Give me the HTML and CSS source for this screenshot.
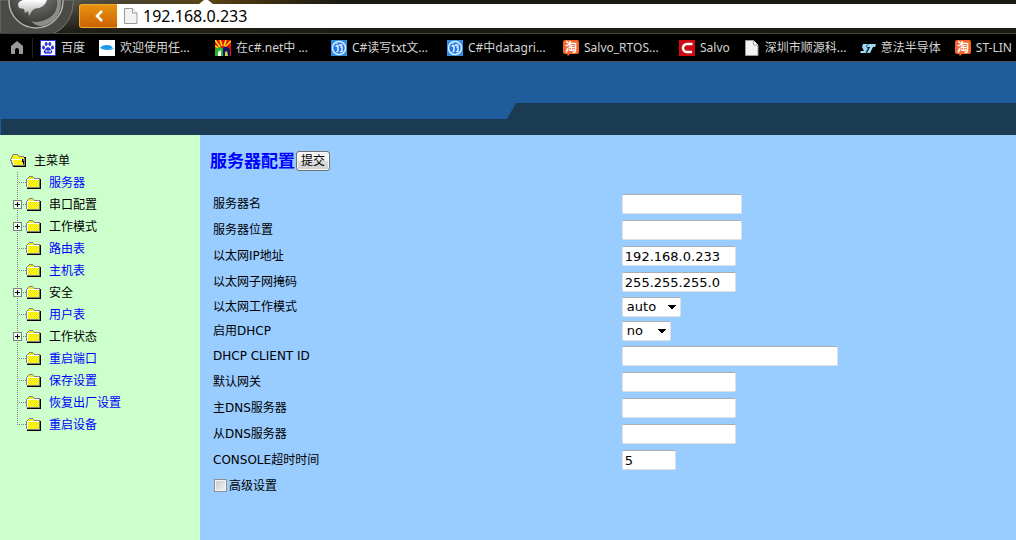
FILE: index.html
```html
<!DOCTYPE html>
<html lang="zh-CN">
<head>
<meta charset="utf-8">
<title>服务器配置</title>
<link rel="stylesheet" href="styles.css">
</head>
<body>
<svg class="defs" width="0" height="0" aria-hidden="true">
  <defs>
    <pattern id="dither" width="2" height="2" patternUnits="userSpaceOnUse">
      <rect width="2" height="2" fill="#ffff00"/>
      <rect width="1" height="1" fill="#ece420"/>
      <rect x="1" y="1" width="1" height="1" fill="#ece420"/>
    </pattern>
    <symbol id="folder" viewBox="0 0 16 14">
      <path d="M1 12h13V3h1v10H1z" fill="#000"/>
      <path d="M0 3h1V2h1V1h1V0h4v1h1v1h6v10H1v-1H0z" fill="#808080"/>
      <path d="M14 3h1v10H2v-1h12z" fill="#000"/>
      <path d="M2 3V2h1V1h4v1h1v1h5v8H2z" fill="url(#dither)"/>
      <path d="M1 11V3h12v1H2v7z" fill="#fff"/>
    </symbol>
    <symbol id="folder-open" viewBox="0 0 16 14">
      <path d="M3 12h11V3h2v10H3z" fill="#000"/>
      <path d="M1 3h1V1h1V0h5v1h1v1h5v2h1v8H2v-2H1V7H0V5h1z" fill="#808080"/>
      <path d="M2 3h1V1h5v1h1v1h5v2H2z" fill="url(#dither)"/>
      <path d="M1 5h11v1H1z" fill="#fff"/>
      <path d="M2 6h10v2h1v3H3V9H2z" fill="url(#dither)"/>
      <path d="M1 6h1v2h1v3h1V8H3V6z" fill="#fff"/>
      <path d="M12 5h1v2h1v3h-1V8h-1z" fill="#000"/>
    </symbol>
    <symbol id="plus" viewBox="0 0 9 9">
      <path d="M0 0h9v9H0z" fill="#808080"/>
      <path d="M1 1h7v7H1z" fill="#efffef"/>
      <path d="M4 2h1v2h2v1H5v2H4V5H2V4h2z" fill="#000"/>
    </symbol>
    <symbol id="page" viewBox="0 0 16 16">
      <path d="M1.500 .5h8l4.500 4.500v10.500h-12.500z" fill="#f2f2f2" stroke="#999"/>
      <path d="M9.500 .5v4.500h4.500" fill="#fff" stroke="#999"/>
    </symbol>
    <symbol id="csdn" viewBox="0 0 16 16">
      <rect width="16" height="16" fill="#2f8fe8"/>
      <circle cx="8" cy="8" r="6.500" fill="#1c78f0" stroke="#d9efff" stroke-width="1.500"/>
      <path d="M4.500 6H7v4q0 1.500-1.500 2M5.500 4l1-.5M8 5h3.500M9.500 7h1.500v4l-2 1" fill="none" stroke="#fff" stroke-width="1.300"/>
    </symbol>
    <symbol id="tao" viewBox="0 0 16 16">
      <path d="M2 0h12q2 0 2 2v10q0 2-2 2H7l-2 2-1-2H2q-2 0-2-2V2q0-2 2-2z" fill="#f4652a"/>
      <text x="2" y="12" class="tao-text">淘</text>
    </symbol>
  </defs>
</svg>

<div class="toolbar">
  <div class="orb-area">
    <svg class="orb" viewBox="0 0 76 34" aria-hidden="true">
      <defs>
        <radialGradient id="ball" cx="50%" cy="30%" r="65%"><stop offset="0" stop-color="#8b8b88"/><stop offset="1" stop-color="#383836"/></radialGradient>
        <linearGradient id="beast" x2="0" y2="1"><stop offset="0" stop-color="#fff"/><stop offset="1" stop-color="#a6a6a4"/></linearGradient>
      </defs>
      <path d="M0 33.500h54Q73 24 73.500 0H0z" fill="#4a4a46" stroke="#77776f"/>
      <circle cx="36" cy="1" r="27" fill="url(#ball)" stroke="#b0b0aa" stroke-width="1.500"/>
      <path d="M57 0q2 16-15 21-7 2-11 0 5 6 12 5Q62 20 61 0z" fill="#8c8c88"/>
      <path d="M23 0h24q-2 6-8 8-5 0-7 3l-3 5-1-5-3 2-1-4-5-1-1-4q1-3 5-4z" fill="url(#beast)"/>
    </svg>
  </div>
  <button class="back" type="button" aria-label="后退">
    <svg width="10" height="14" viewBox="0 0 10 14"><path d="M8 2L3 7l5 5" fill="none" stroke="#fff" stroke-width="2.500"/></svg>
  </button>
  <div class="address">
    <span class="notch"></span>
    <svg width="16" height="16"><use href="#page"/></svg>
    <input class="address-input" type="text" value="192.168.0.233" aria-label="地址">
  </div>
</div>

<nav class="bookmarks" aria-label="书签">
  <a class="home" href="#" aria-label="主页"><svg width="14" height="14" viewBox="0 0 14 14"><path d="M7 0l6 5v8H9V9q0-2-2-2T5 9v4H1V5z" fill="#9a9a9a"/></svg></a>
  <a class="mark" href="#"><svg viewBox="0 0 16 16"><rect width="16" height="16" fill="#2b36d9"/><path d="M1 1h14v14H1z" fill="#fff"/><g fill="#2b36d9"><ellipse cx="3.500" cy="7.500" rx="1.500" ry="2"/><ellipse cx="6.200" cy="4" rx="1.500" ry="2"/><ellipse cx="9.800" cy="4" rx="1.500" ry="2"/><ellipse cx="12.500" cy="7.500" rx="1.500" ry="2"/><path d="M8 7q2 0 3 2.500 2 1.500 1 3.500-1 1-4 .5-3 .5-4-.5-1-2 1-3.500Q6 7 8 7z"/></g><path d="M6 10v2h1v-2M9 10v2h1.500v-2" fill="none" stroke="#fff" stroke-width=".7"/></svg><span>百度</span></a>
  <a class="mark long" href="#"><svg viewBox="0 0 16 16"><rect width="16" height="16" fill="#fff"/><path d="M1 8q2-3 7-3 5 0 6 4-2 1-5 1-5 0-8-2z" fill="#159bea"/><path d="M9 9l6-1v1z" fill="#7fcaf5"/></svg><span>欢迎使用任...</span></a>
  <a class="mark long" href="#"><svg viewBox="0 0 16 16"><rect width="16" height="16" fill="#e81010"/><path d="M0 0l5 7M5 0l2 6M11 0L9 6M16 1l-6 6M0 6l5 3" stroke="#ffea00" stroke-width="1.500"/><path d="M0 16V9l4-2 4 1 1 8z" fill="#25b52c"/><path d="M8 16V8q4-4 7 2v6z" fill="#10126d"/><path d="M3 16v-4l3-2v6z" fill="#fff"/><path d="M10 16v-4l2-1 1 5z" fill="#d9d928"/></svg><span>在c#.net中 ...</span></a>
  <a class="mark long" href="#"><svg><use href="#csdn"/></svg><span>C#读写txt文...</span></a>
  <a class="mark long" href="#"><svg><use href="#csdn"/></svg><span>C#中datagri...</span></a>
  <a class="mark long" href="#"><svg><use href="#tao"/></svg><span>Salvo_RTOS...</span></a>
  <a class="mark" href="#"><svg viewBox="0 0 16 16"><rect width="16" height="16" fill="#d00a10"/><path d="M13.500 4H8a4 4 0 0 0 0 8h5" fill="none" stroke="#fff" stroke-width="2.500"/></svg><span>Salvo</span></a>
  <a class="mark long" href="#"><svg><use href="#page"/></svg><span>深圳市顺源科...</span></a>
  <a class="mark" href="#"><svg viewBox="0 0 16 16"><path d="M3 4h13l-1 3h-2l-3 6H7l3-6H7l1 2-2 4H0l1-2h3L2 7z" fill="#a4d8f4"/><path d="M8.500 4.500L6 6l2 2.500L6 12" fill="none" stroke="#1c5c90"/></svg><span>意法半导体</span></a>
  <a class="mark" href="#"><svg><use href="#tao"/></svg><span>ST-LIN</span></a>
</nav>

<header class="banner"><div class="band-low"></div><div class="band-high"></div></header>

<div class="layout">
  <nav class="menu" aria-label="主菜单">
    <div class="root"><svg class="folder"><use href="#folder-open"/></svg><span>主菜单</span></div>
    <ul class="tree">
      <li><svg class="folder"><use href="#folder"/></svg><a href="#">服务器</a></li>
      <li class="branch"><svg class="plus"><use href="#plus"/></svg><svg class="folder"><use href="#folder"/></svg><span>串口配置</span></li>
      <li class="branch"><svg class="plus"><use href="#plus"/></svg><svg class="folder"><use href="#folder"/></svg><span>工作模式</span></li>
      <li><svg class="folder"><use href="#folder"/></svg><a href="#">路由表</a></li>
      <li><svg class="folder"><use href="#folder"/></svg><a href="#">主机表</a></li>
      <li class="branch"><svg class="plus"><use href="#plus"/></svg><svg class="folder"><use href="#folder"/></svg><span>安全</span></li>
      <li><svg class="folder"><use href="#folder"/></svg><a href="#">用户表</a></li>
      <li class="branch"><svg class="plus"><use href="#plus"/></svg><svg class="folder"><use href="#folder"/></svg><span>工作状态</span></li>
      <li><svg class="folder"><use href="#folder"/></svg><a href="#">重启端口</a></li>
      <li><svg class="folder"><use href="#folder"/></svg><a href="#">保存设置</a></li>
      <li><svg class="folder"><use href="#folder"/></svg><a href="#">恢复出厂设置</a></li>
      <li><svg class="folder"><use href="#folder"/></svg><a href="#">重启设备</a></li>
    </ul>
  </nav>
  <main class="content">
    <form>
      <div class="title"><h1>服务器配置</h1><button class="submit" type="button">提交</button></div>
      <table class="fields">
        <tr><th><label for="name">服务器名</label></th><td><input class="box medium" id="name" type="text"></td></tr>
        <tr><th><label for="place">服务器位置</label></th><td><input class="box medium" id="place" type="text"></td></tr>
        <tr><th><label for="ip">以太网IP地址</label></th><td><input class="box" id="ip" type="text" value="192.168.0.233"></td></tr>
        <tr><th><label for="mask">以太网子网掩码</label></th><td><input class="box" id="mask" type="text" value="255.255.255.0"></td></tr>
        <tr class="pick"><th><label for="mode">以太网工作模式</label></th><td><select class="box mode" id="mode"><option>auto</option></select></td></tr>
        <tr class="pick"><th><label for="dhcp">启用DHCP</label></th><td><select class="box yesno" id="dhcp"><option>no</option><option>yes</option></select></td></tr>
        <tr><th><label for="client">DHCP CLIENT ID</label></th><td><input class="box wide" id="client" type="text"></td></tr>
        <tr><th><label for="gateway">默认网关</label></th><td><input class="box" id="gateway" type="text"></td></tr>
        <tr><th><label for="dns1">主DNS服务器</label></th><td><input class="box" id="dns1" type="text"></td></tr>
        <tr><th><label for="dns2">从DNS服务器</label></th><td><input class="box" id="dns2" type="text"></td></tr>
        <tr><th><label for="timeout">CONSOLE超时时间</label></th><td><input class="box short" id="timeout" type="text" value="5"></td></tr>
        <tr><td colspan="2"><div class="advanced"><input class="check" id="advanced" type="checkbox"><label for="advanced">高级设置</label></div></td></tr>
      </table>
    </form>
  </main>
</div>
</body>
</html>
```
FILE: styles.css
```css
* { box-sizing: border-box; }

body {
  margin: 0;
  min-height: 100vh;
  display: flex;
  flex-direction: column;
  overflow-x: hidden;
  font: 12px/16px "DejaVu Sans", "Noto Sans CJK SC", sans-serif;
  color: #000;
}

a { color: #0000ff; text-decoration: none; }
svg { display: block; flex: none; }
.defs { position: absolute; }

/* Browser toolbar */
.toolbar {
  display: flex;
  align-items: flex-start;
  height: 33px;
  background: linear-gradient(transparent, #1c1c14), linear-gradient(90deg, #56564e 70px, #4c4430 130px, #5e4414 210px, #3c2e10 270px, #1a1a12 340px);
}
.orb-area { flex: none; width: 79px; height: 33px; overflow: hidden; }
.orb { width: 76px; height: 34px; }
.back {
  display: flex;
  align-items: center;
  justify-content: center;
  flex: none;
  width: 38px;
  height: 24px;
  margin-top: 4px;
  padding: 0;
  border: 1px solid #f0a830;
  border-right: 0;
  border-radius: 3px 0 0 3px;
  background: linear-gradient(#e8930f, #cc6206);
}
.address {
  position: relative;
  display: flex;
  align-items: center;
  gap: 4px;
  flex: 1;
  height: 24px;
  margin-top: 4px;
  padding-left: 6px;
  background: #fff;
}
.notch {
  position: absolute;
  left: 82px;
  top: -4px;
  width: 14px;
  height: 4px;
  background: #fff;
  clip-path: polygon(5px 0, 9px 0, 100% 100%, 0 100%);
}
.address-input {
  flex: 1;
  min-width: 0;
  padding: 0;
  border: 0;
  background: none;
  font: 16px/20px "Noto Sans", sans-serif;
  color: #000;
}

/* Bookmarks */
.bookmarks {
  display: flex;
  align-items: center;
  gap: 14px;
  height: 29px;
  overflow: hidden;
  border-top: 1px solid #44443c;
  border-bottom: 1px solid #4a525a;
  background: #000;
  font: 12px/16px "Noto Sans", "Noto Sans CJK SC", sans-serif;
}
.home {
  flex: none;
  width: 33px;
  margin-right: -7px;
  padding: 3px 0 3px 10px;
  border-right: 1px solid #222;
}
.mark {
  display: flex;
  align-items: center;
  gap: 5px;
  flex: none;
  color: #d4d4d4;
  white-space: nowrap;
}
.mark svg { width: 16px; height: 16px; }
.long { width: 102px; }
.tao-text { font: bold 12px "Noto Sans CJK SC", sans-serif; fill: #fff; }

/* Page banner */
.banner {
  display: flex;
  align-items: flex-end;
  height: 73px;
  background: #1f5c9b;
}
.band-low { flex: none; width: calc(50% - 1px); height: 16px; background: #1b3b53; border-left: 1px solid #1f5c9b; }
.band-high {
  flex: 1;
  height: 32px;
  background: #1b3b53;
  clip-path: polygon(9px 0, 100% 0, 100% 100%, 0 100%, 0 16px);
}

.layout { display: flex; flex: 1; }

/* Tree menu */
.menu {
  flex: none;
  width: 200px;
  padding: 15px 10px 14px;
  background: #ccffcc;
}
.root { display: flex; align-items: center; gap: 8px; height: 22px; }
.folder { width: 16px; height: 14px; }
.tree {
  margin: 0;
  padding: 0 0 0 3px;
  list-style: none;
}
.tree li {
  display: flex;
  align-items: center;
  height: 22px;
  padding-left: 13px;
  gap: 7px;
  background:
    repeating-linear-gradient(#808080 0 1px, transparent 1px 2px) 4px 0 / 1px 100% no-repeat,
    repeating-linear-gradient(90deg, #808080 0 1px, transparent 1px 2px) 6px 10px / 7px 1px no-repeat;
}
.tree li:last-child {
  background-size: 1px 11px, 7px 1px;
}
.tree .branch { padding-left: 0; }
.plus { width: 9px; height: 9px; margin: 0 -3px 1px 0; }

/* Configuration form */
.content { flex: 1; min-width: 0; padding: 14px 10px; background: #99ccff; }
.title { display: flex; align-items: center; gap: 1px; height: 24px; }
h1 { margin: 0; font: bold 17px/24px "DejaVu Sans", "Noto Sans CJK SC", sans-serif; color: #0000ff; }
.submit {
  height: 20px;
  padding: 0 4px;
  border: 1px solid #707070;
  border-radius: 3px;
  background: linear-gradient(#f3f3f3 45%, #dcdcdc 55%, #cfcfcf);
  box-shadow: inset 0 0 0 1px #fafafa;
  font: 12px/16px "DejaVu Sans", "Noto Sans CJK SC", sans-serif;
  color: #000;
}
.fields {
  width: 100%;
  margin-top: 17px;
  border-spacing: 2px;
  table-layout: fixed;
}
.fields th, .fields td { height: 24px; padding: 0 1px; text-align: left; font-weight: normal; }
.fields th { width: 51.5%; }
.fields .pick th, .fields .pick td { height: 22px; }
.box {
  display: block;
  width: 114px;
  height: 20px;
  padding: 0 2px;
  border: 1px solid #dcdfe4;
  border-top-color: #abadb3;
  border-radius: 2px;
  background: #fff;
  font: 13px/18px "DejaVu Sans", sans-serif;
  color: #000;
}
.medium { width: 120px; }
.wide { width: 216px; }
.short { width: 54px; }
select.box {
  appearance: none;
  padding: 0 4px;
  background: conic-gradient(from 315deg at 50% 100%, #000 90deg, #fff 0) right 4px center / 8px 4px no-repeat #fff;
}
.mode { width: 59px; }
.yesno { width: 49px; }
.advanced { display: flex; align-items: center; gap: 2px; }
.check {
  appearance: none;
  width: 13px;
  height: 13px;
  margin: 0 0 2px 1px;
  border: 1px solid #8e8f8f;
  background: linear-gradient(135deg, #c4c8d0, #f6f6f6);
  box-shadow: inset 0 0 0 1px #f4f4f4;
}
.check:checked { background: #2858a0; }
```
